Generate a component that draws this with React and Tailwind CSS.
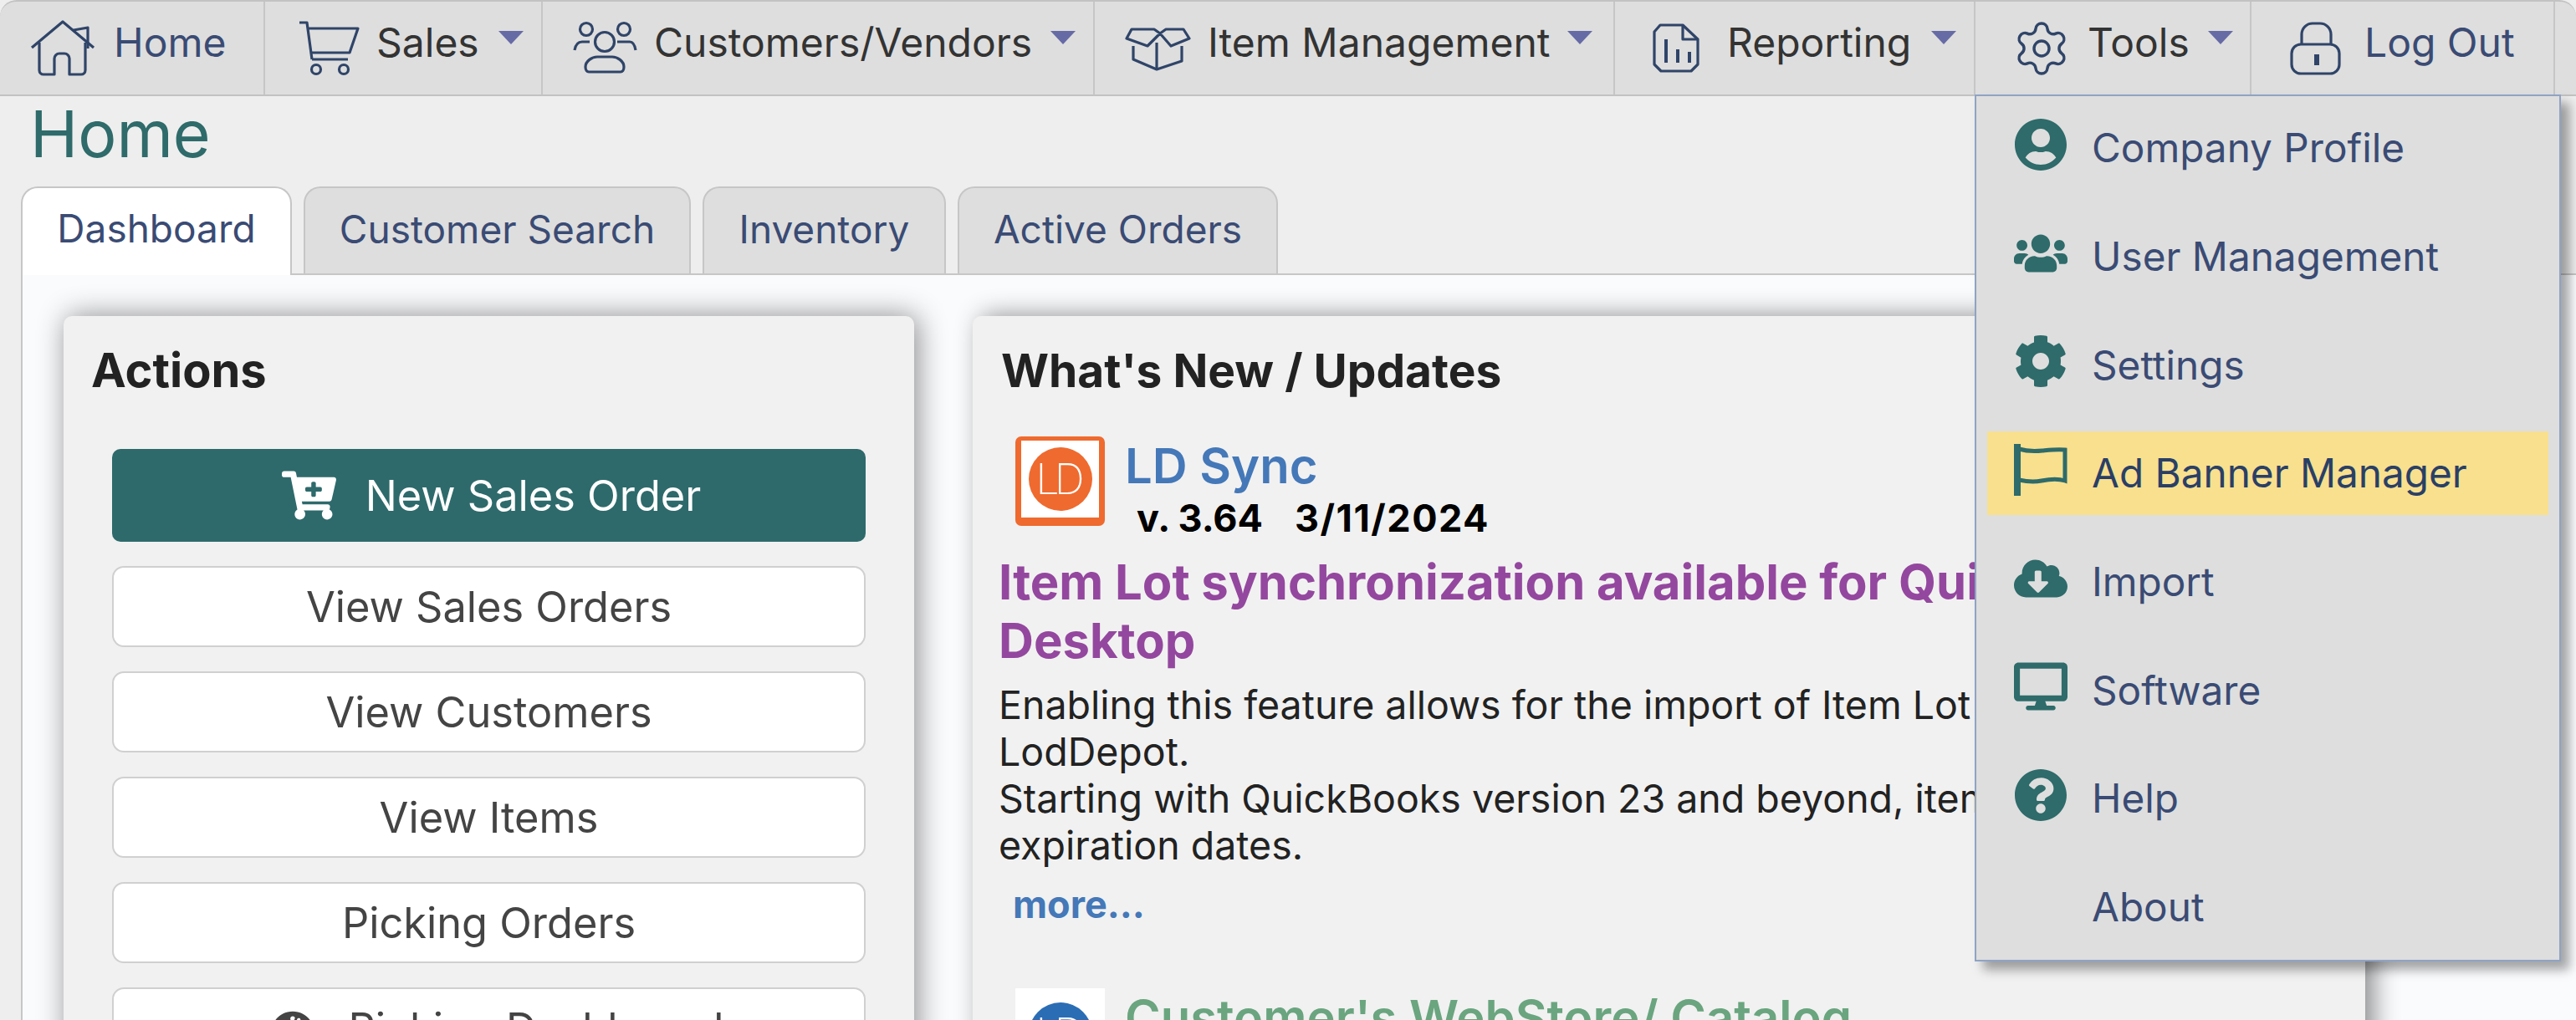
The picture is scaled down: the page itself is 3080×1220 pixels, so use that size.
import {
  FaUserCircle,
  FaUsers,
  FaCog,
  FaCloudDownloadAlt,
  FaDesktop,
  FaQuestionCircle,
  FaCartPlus,
  FaTachometerAlt,
} from "react-icons/fa";
import { Settings } from "lucide-react";

const HomeIcon = () => (
  <svg width="78" height="72" viewBox="0 0 78 72" fill="none" stroke="#2f4468" strokeWidth="3.2" strokeLinejoin="round">
    <path d="M2 35 39 4l37 31" />
    <path d="M11 29v33a5 5 0 0 0 5 5h13V48a6 6 0 0 1 6-6h6a6 6 0 0 1 6 6v19h14a5 5 0 0 0 5-5V29" />
    <path d="M52 14l17-3v25" />
  </svg>
);

const CartIcon = () => (
  <svg width="76" height="70" viewBox="0 0 76 70" fill="none" stroke="#2f4468" strokeWidth="3.2" strokeLinejoin="round">
    <path d="M3 4h9l6 44" />
    <path d="M12 11h61l-10 29H17" />
    <path d="M18 48h43" />
    <circle cx="23" cy="60" r="5.5" />
    <circle cx="56" cy="60" r="5.5" />
  </svg>
);

const PeopleIcon = () => (
  <svg width="80" height="66" viewBox="0 0 80 66" fill="none" stroke="#2f4468" strokeWidth="3.2">
    <circle cx="17" cy="10" r="7.5" />
    <circle cx="62" cy="10" r="7.5" />
    <circle cx="39" cy="25" r="11.5" />
    <path d="M16 55c0-7 8-12 14-12h18c6 0 14 5 14 12 0 4-2 6-4 6H20c-2 0-4-2-4-6z" />
    <path d="M3 35c1-6 4-10 9-10h9" />
    <path d="M54 25h15c4 0 6 4 7 10" />
  </svg>
);

const BoxIcon = () => (
  <svg width="80" height="60" viewBox="0 0 80 60" fill="none" stroke="#2f4468" strokeWidth="3.2" strokeLinejoin="round">
    <path d="M3 18 9 7h27l7 5 7-5h21l7 11-22 9-13-15-15 15z" />
    <path d="M11 27v16l28 12 30-10V27" />
    <path d="M39 23v32" />
  </svg>
);

const ReportIcon = () => (
  <svg width="58" height="62" viewBox="0 0 58 62" fill="none" stroke="#2f4468" strokeWidth="3.2" strokeLinejoin="round">
    <path d="M3 11l7-8h27l18 17v30l-8 8H11l-8-8z" />
    <path d="M37 3v17h18" />
    <path d="M17 20v28M31 32v16M45 35v13" strokeWidth="4" />
  </svg>
);

const LockIcon = () => (
  <svg width="64" height="66" viewBox="0 0 64 66" fill="none" stroke="#2f4468" strokeWidth="3.2">
    <rect x="3" y="28" width="57" height="35" rx="11" />
    <path d="M15 28V16A13 13 0 0 1 28 3h9a13 13 0 0 1 13 13v12" />
    <path d="M33 40v13" strokeWidth="6" />
  </svg>
);

// banner outline with a square pole, FaRegFlag has a round knob on top
const FlagIcon = () => (
  <svg width="64" height="64" viewBox="0 0 64 64" fill="none" stroke="currentColor">
    <path d="M4 1v62" strokeWidth="8" />
    <path d="M6 7c10 3 18 3 28 2s18-2 27-1v37c-9-3-18-2-28 0s-18 1-27-1" strokeWidth="5" />
  </svg>
);

const Arrow = ({ className }) => (
  <span className={`self-start mt-[35px] w-0 h-0 border-x-[15px] border-x-transparent border-t-[16px] border-t-[#666ba6] ${className}`} />
);

const LogoCircle = ({ color }) => (
  <span className={`w-[76px] h-[76px] shrink-0 rounded-full flex items-center justify-center text-white text-[50px] font-extralight tracking-[-6px] pr-[6px] ${color}`}>
    LD
  </span>
);

const menuItems = [
  { label: "Company Profile", icon: <FaUserCircle size={64} /> },
  { label: "User Management", icon: <FaUsers size={64} /> },
  { label: "Settings", icon: <FaCog size={64} /> },
  { label: "Ad Banner Manager", icon: <FlagIcon />, active: true },
  { label: "Import", icon: <FaCloudDownloadAlt size={64} /> },
  { label: "Software", icon: <FaDesktop size={64} /> },
  { label: "Help", icon: <FaQuestionCircle size={64} /> },
  { label: "About", icon: null },
];

const actions = ["View Sales Orders", "View Customers", "View Items", "Picking Orders"];

export default function App() {
  return (
    <div className="relative w-[3080px] h-[1220px] overflow-hidden bg-[#eeeeee] font-['Inter',sans-serif]">
      {/* top nav */}
      <nav className="flex h-[115px] bg-[#dedede] border-y-2 border-[#c2c2c2] rounded-tl-[20px] rounded-tr-[20px] text-[48px] text-[#333333]">
        <div className="flex items-center w-[317px] pl-[36px] border-r-2 border-[#c6c6c6]">
          <HomeIcon />
          <span className="ml-[22px] mb-[14px] text-[#3a4b74]">Home</span>
        </div>
        <div className="flex items-center w-[332px] pl-[38px] border-r-2 border-[#c6c6c6]">
          <CartIcon />
          <span className="ml-[19px] mb-[14px]">Sales</span>
          <Arrow className="ml-[23px]" />
        </div>
        <div className="flex items-center w-[660px] pl-[35px] border-r-2 border-[#c6c6c6]">
          <PeopleIcon />
          <span className="ml-[18px] mb-[14px]">Customers/Vendors</span>
          <Arrow className="ml-[22px]" />
        </div>
        <div className="flex items-center w-[622px] pl-[35px] border-r-2 border-[#c6c6c6]">
          <BoxIcon />
          <span className="ml-[20px] mb-[14px]">Item Management</span>
          <Arrow className="ml-[20px]" />
        </div>
        <div className="flex items-center w-[431px] pl-[44px] border-r-2 border-[#c6c6c6]">
          <ReportIcon />
          <span className="ml-[32px] mb-[14px]">Reporting</span>
          <Arrow className="ml-[24px]" />
        </div>
        <div className="flex items-center w-[330px] pl-[43px] border-r-2 border-[#c6c6c6]">
          <Settings size={72} strokeWidth={1.15} className="text-[#2f4468]" />
          <span className="ml-[19px] mb-[14px]">Tools</span>
          <Arrow className="ml-[22px]" />
        </div>
        <div className="flex items-center w-[363px] pl-[45px] border-r-2 border-[#c6c6c6]">
          <LockIcon />
          <span className="ml-[26px] mb-[14px] text-[#3a4b74]">Log Out</span>
        </div>
      </nav>

      <h1 className="h-[108px] pl-[36px] text-[77px] leading-[90px] font-normal text-[#2e6b6a]">Home</h1>

      {/* tabs */}
      <div className="flex gap-[14px] pl-[25px] h-[104px] text-[46px] text-[#3a4b74]">
        <div className="relative z-10 w-[324px] h-[106px] flex items-center justify-center pb-[8px] bg-white border-2 border-b-0 border-[#c6c6c6] rounded-t-[20px]">
          Dashboard
        </div>
        <div className="w-[463px] flex items-center justify-center pb-[4px] bg-[#dedede] border-2 border-b-0 border-[#c6c6c6] rounded-t-[20px]">
          Customer Search
        </div>
        <div className="w-[291px] flex items-center justify-center pb-[4px] bg-[#dedede] border-2 border-b-0 border-[#c6c6c6] rounded-t-[20px]">
          Inventory
        </div>
        <div className="w-[383px] flex items-center justify-center pb-[4px] bg-[#dedede] border-2 border-b-0 border-[#c6c6c6] rounded-t-[20px]">
          Active Orders
        </div>
      </div>

      {/* dashboard panel */}
      <div className="ml-[25px] flex gap-[70px] h-[900px] pt-[49px] pl-[49px] bg-[#fafbfd] border-t-2 border-l-2 border-[#c6c6c6]">
        <section className="w-[1017px] h-[900px] shrink-0 px-[58px] pt-[30px] bg-[#f1f1f1] rounded-[10px] shadow-[4px_0_34px_rgba(0,0,0,0.45)]">
          <h2 className="-ml-[25px] h-[70px] text-[56px] leading-[70px] font-bold text-[#222222]">Actions</h2>
          <div className="flex flex-col gap-[29px] mt-[59px] text-[50.5px] text-[#444444]">
            <button className="h-[111px] flex items-center justify-center gap-[35px] pl-[6px] bg-[#2e6a6b] rounded-[10px] text-white">
              <FaCartPlus size={65} />
              New Sales Order
            </button>
            {actions.map((label) => (
              <button key={label} className="h-[97px] flex items-center justify-center bg-white border-2 border-[#d0d0d0] rounded-[14px]">
                {label}
              </button>
            ))}
            <button className="h-[97px] flex items-center justify-center gap-[41px] pl-[20px] bg-white border-2 border-[#d0d0d0] rounded-[14px]">
              <FaTachometerAlt size={52} />
              Picking Dashboard
            </button>
          </div>
        </section>

        <section className="w-[1665px] h-[900px] shrink-0 pl-[32px] pt-[30px] bg-[#f1f1f1] rounded-[10px] shadow-[10px_0_30px_rgba(0,0,0,0.45)]">
          <h2 className="ml-[2px] h-[70px] text-[55px] leading-[70px] font-bold text-[#222222]">What's New / Updates</h2>

          <div className="flex h-[107px] mt-[44px] ml-[19px]">
            <div className="w-[107px] h-[107px] shrink-0 flex items-center justify-center bg-white border-x-[7px] border-t-[5px] border-b-[10px] border-[#ef6a2e] rounded-[7px]">
              <LogoCircle color="bg-[#ef6a2e]" />
            </div>
            <div className="ml-[24px] pt-[5px]">
              <div className="text-[58px] leading-[60px] font-semibold text-[#4478b8]">LD Sync</div>
              <div className="mt-[13px] ml-[14px] text-[45px] leading-[40px] font-bold text-black whitespace-pre">
                v. 3.64   <span className="ml-[6px] tracking-[1.5px]">3/11/2024</span>
              </div>
            </div>
          </div>

          <h3 className="mt-[32px] -ml-[1px] text-[58px] leading-[70px] font-bold text-[#94479e] whitespace-nowrap">
            Item Lot synchronization available for QuickBooks
            <br />
            Desktop
          </h3>
          <p className="mt-[14px] -ml-[1px] text-[46.5px] leading-[56px] text-[#222222] whitespace-nowrap">
            Enabling this feature allows for the import of Item Lot information into
            <br />
            LodDepot.
            <br />
            Starting with QuickBooks version 23 and beyond, item lots have
            <br />
            expiration dates.
          </p>
          <div className="mt-[15px] ml-[16px] text-[45px] leading-[56px] font-bold text-[#4478b8]">more...</div>

          <div className="flex h-[107px] mt-[72px] ml-[19px]">
            <div className="w-[107px] h-[107px] shrink-0 flex items-center justify-center bg-white pt-[2px]">
              <LogoCircle color="bg-[#2a6db5]" />
            </div>
            <div className="ml-[24px] pt-[5px] text-[58px] leading-[60px] font-semibold text-[#6aa57f]">Customer's WebStore/ Catalog</div>
          </div>
        </section>
      </div>

      {/* tools dropdown, open over the page */}
      <div className="absolute left-[2361px] top-[113px] w-[701px] h-[1037px] flex flex-col gap-[29.7px] pt-[12px] px-[13px] bg-[#dedede] border-2 border-[#8fa3c4] shadow-[10px_10px_12px_rgba(0,0,0,0.35)] z-20">
        {menuItems.map((item) => (
          <div
            key={item.label}
            className={`h-[100px] shrink-0 flex items-center pl-[32px] text-[47.7px] ${item.active ? "bg-[#f8e08e] text-[#2a3f66]" : "text-[#3a4b74]"}`}
          >
            <span className="w-[64px] mb-[8px] flex justify-center text-[#2e6b6a]">{item.icon}</span>
            <span className="ml-[29px] mt-[2px]">{item.label}</span>
          </div>
        ))}
      </div>
    </div>
  );
}
